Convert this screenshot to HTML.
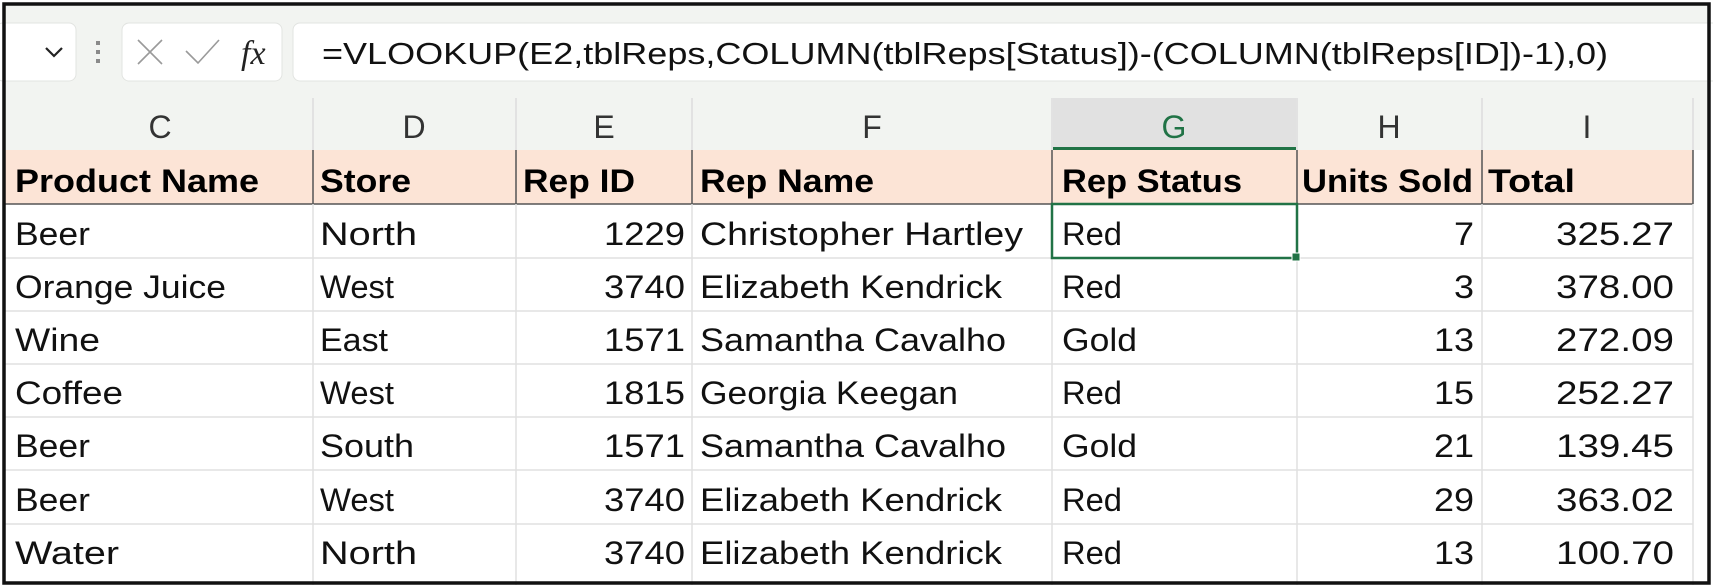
<!DOCTYPE html>
<html><head><meta charset="utf-8"><style>
html,body{margin:0;padding:0;background:#fff}
svg{display:block}
text{font-family:"Liberation Sans",sans-serif}
text.fx{font-family:"Liberation Serif",serif;font-style:italic}
</style></head><body>
<svg width="1713" height="587" viewBox="0 0 1713 587" xmlns="http://www.w3.org/2000/svg">
<rect x="0" y="0" width="1713" height="587" fill="#fff"/>
<rect x="5" y="5" width="1703" height="145" fill="#f2f4f1"/>
<rect x="-4" y="23" width="80" height="58" rx="7" fill="#fff" stroke="#e2e4e1"/>
<path d="M46 48 L54 56 L62 48" fill="none" stroke="#222" stroke-width="2.2"/>
<rect x="96" y="41" width="4" height="4" fill="#8a8a8a"/><rect x="96" y="50" width="4" height="4" fill="#8a8a8a"/><rect x="96" y="59" width="4" height="4" fill="#8a8a8a"/>
<rect x="122" y="23" width="160" height="58" rx="7" fill="#fff" stroke="#e2e4e1"/>
<path d="M138 40 L162 64 M162 40 L138 64" stroke="#9a9a9a" stroke-width="1.6"/>
<path d="M186 51 L198 63 L219 40" fill="none" stroke="#9a9a9a" stroke-width="1.6"/>
<text class="fx" x="241" y="64" font-size="34" fill="#222">fx</text>
<rect x="293" y="23" width="1430" height="58" rx="7" fill="#fff" stroke="#e2e4e1"/>
<text x="322" y="64" font-size="31" fill="#111" textLength="1286" lengthAdjust="spacingAndGlyphs">=VLOOKUP(E2,tblReps,COLUMN(tblReps[Status])-(COLUMN(tblReps[ID])-1),0)</text>
<g stroke="#dcdcdc" stroke-width="1.5">
<line x1="313" y1="98" x2="313" y2="150"/><line x1="516" y1="98" x2="516" y2="150"/><line x1="692" y1="98" x2="692" y2="150"/><line x1="1052" y1="98" x2="1052" y2="150"/><line x1="1297" y1="98" x2="1297" y2="150"/><line x1="1482" y1="98" x2="1482" y2="150"/><line x1="1693" y1="98" x2="1693" y2="150"/>
</g>
<rect x="1053" y="98" width="243" height="52" fill="#e1e1e1"/>
<rect x="1053" y="147" width="243" height="3" fill="#217346"/>
<g font-size="32" fill="#333" text-anchor="middle">
<text x="160" y="138">C</text><text x="414" y="138">D</text><text x="604" y="138">E</text><text x="872" y="138">F</text><text x="1174" y="138" fill="#217346">G</text><text x="1389" y="138">H</text><text x="1587" y="138">I</text>
</g>
<rect x="5" y="150" width="1688" height="54" fill="#fce4d6"/>
<g stroke="#555" stroke-width="1.5">
<line x1="313" y1="150" x2="313" y2="204"/><line x1="516" y1="150" x2="516" y2="204"/><line x1="692" y1="150" x2="692" y2="204"/><line x1="1052" y1="150" x2="1052" y2="204"/><line x1="1297" y1="150" x2="1297" y2="204"/><line x1="1482" y1="150" x2="1482" y2="204"/><line x1="1693" y1="150" x2="1693" y2="204"/>
<line x1="5" y1="204" x2="1693" y2="204"/>
</g>
<g font-size="32" font-weight="bold" fill="#000">
<text x="15" y="192" textLength="244" lengthAdjust="spacingAndGlyphs">Product Name</text>
<text x="320" y="192" textLength="91" lengthAdjust="spacingAndGlyphs">Store</text>
<text x="523" y="192" textLength="112" lengthAdjust="spacingAndGlyphs">Rep ID</text>
<text x="700" y="192" textLength="174" lengthAdjust="spacingAndGlyphs">Rep Name</text>
<text x="1062" y="192" textLength="180" lengthAdjust="spacingAndGlyphs">Rep Status</text>
<text x="1302" y="192" textLength="171" lengthAdjust="spacingAndGlyphs">Units Sold</text>
<text x="1488" y="192" textLength="87" lengthAdjust="spacingAndGlyphs">Total</text>
</g>
<g stroke="#e0e0e0" stroke-width="1.5">
<line x1="5" y1="258" x2="1693" y2="258"/><line x1="5" y1="311" x2="1693" y2="311"/><line x1="5" y1="364" x2="1693" y2="364"/><line x1="5" y1="417" x2="1693" y2="417"/><line x1="5" y1="470" x2="1693" y2="470"/><line x1="5" y1="524" x2="1693" y2="524"/>
<line x1="313" y1="204" x2="313" y2="585"/><line x1="516" y1="204" x2="516" y2="585"/><line x1="692" y1="204" x2="692" y2="585"/><line x1="1052" y1="204" x2="1052" y2="585"/><line x1="1297" y1="204" x2="1297" y2="585"/><line x1="1482" y1="204" x2="1482" y2="585"/><line x1="1693" y1="204" x2="1693" y2="585"/>
</g>
<rect x="1694" y="150" width="14" height="435" fill="#fff"/>
<g font-size="32" fill="#111">
<text x="15" y="245" textLength="75" lengthAdjust="spacingAndGlyphs">Beer</text>
<text x="15" y="298" textLength="211" lengthAdjust="spacingAndGlyphs">Orange Juice</text>
<text x="15" y="351" textLength="85" lengthAdjust="spacingAndGlyphs">Wine</text>
<text x="15" y="404" textLength="108" lengthAdjust="spacingAndGlyphs">Coffee</text>
<text x="15" y="457" textLength="75" lengthAdjust="spacingAndGlyphs">Beer</text>
<text x="15" y="511" textLength="75" lengthAdjust="spacingAndGlyphs">Beer</text>
<text x="15" y="564" textLength="104" lengthAdjust="spacingAndGlyphs">Water</text>

<text x="320" y="245" textLength="97" lengthAdjust="spacingAndGlyphs">North</text>
<text x="320" y="298" textLength="74" lengthAdjust="spacingAndGlyphs">West</text>
<text x="320" y="351" textLength="68" lengthAdjust="spacingAndGlyphs">East</text>
<text x="320" y="404" textLength="74" lengthAdjust="spacingAndGlyphs">West</text>
<text x="320" y="457" textLength="94" lengthAdjust="spacingAndGlyphs">South</text>
<text x="320" y="511" textLength="74" lengthAdjust="spacingAndGlyphs">West</text>
<text x="320" y="564" textLength="97" lengthAdjust="spacingAndGlyphs">North</text>

<g text-anchor="end">
<text x="685" y="245" textLength="81" lengthAdjust="spacingAndGlyphs">1229</text><text x="685" y="298" textLength="81" lengthAdjust="spacingAndGlyphs">3740</text><text x="685" y="351" textLength="81" lengthAdjust="spacingAndGlyphs">1571</text><text x="685" y="404" textLength="81" lengthAdjust="spacingAndGlyphs">1815</text><text x="685" y="457" textLength="81" lengthAdjust="spacingAndGlyphs">1571</text><text x="685" y="511" textLength="81" lengthAdjust="spacingAndGlyphs">3740</text><text x="685" y="564" textLength="81" lengthAdjust="spacingAndGlyphs">3740</text>
<text x="1474" y="245" textLength="20" lengthAdjust="spacingAndGlyphs">7</text><text x="1474" y="298" textLength="20" lengthAdjust="spacingAndGlyphs">3</text><text x="1474" y="351" textLength="40" lengthAdjust="spacingAndGlyphs">13</text><text x="1474" y="404" textLength="40" lengthAdjust="spacingAndGlyphs">15</text><text x="1474" y="457" textLength="40" lengthAdjust="spacingAndGlyphs">21</text><text x="1474" y="511" textLength="40" lengthAdjust="spacingAndGlyphs">29</text><text x="1474" y="564" textLength="40" lengthAdjust="spacingAndGlyphs">13</text>
<text x="1674" y="245" textLength="118" lengthAdjust="spacingAndGlyphs">325.27</text><text x="1674" y="298" textLength="118" lengthAdjust="spacingAndGlyphs">378.00</text><text x="1674" y="351" textLength="118" lengthAdjust="spacingAndGlyphs">272.09</text><text x="1674" y="404" textLength="118" lengthAdjust="spacingAndGlyphs">252.27</text><text x="1674" y="457" textLength="118" lengthAdjust="spacingAndGlyphs">139.45</text><text x="1674" y="511" textLength="118" lengthAdjust="spacingAndGlyphs">363.02</text><text x="1674" y="564" textLength="118" lengthAdjust="spacingAndGlyphs">100.70</text>
</g>

<text x="700" y="245" textLength="323" lengthAdjust="spacingAndGlyphs">Christopher Hartley</text>
<text x="700" y="298" textLength="302" lengthAdjust="spacingAndGlyphs">Elizabeth Kendrick</text>
<text x="700" y="351" textLength="306" lengthAdjust="spacingAndGlyphs">Samantha Cavalho</text>
<text x="700" y="404" textLength="258" lengthAdjust="spacingAndGlyphs">Georgia Keegan</text>
<text x="700" y="457" textLength="306" lengthAdjust="spacingAndGlyphs">Samantha Cavalho</text>
<text x="700" y="511" textLength="302" lengthAdjust="spacingAndGlyphs">Elizabeth Kendrick</text>
<text x="700" y="564" textLength="302" lengthAdjust="spacingAndGlyphs">Elizabeth Kendrick</text>

<text x="1062" y="245" textLength="60" lengthAdjust="spacingAndGlyphs">Red</text>
<text x="1062" y="298" textLength="60" lengthAdjust="spacingAndGlyphs">Red</text>
<text x="1062" y="351" textLength="75" lengthAdjust="spacingAndGlyphs">Gold</text>
<text x="1062" y="404" textLength="60" lengthAdjust="spacingAndGlyphs">Red</text>
<text x="1062" y="457" textLength="75" lengthAdjust="spacingAndGlyphs">Gold</text>
<text x="1062" y="511" textLength="60" lengthAdjust="spacingAndGlyphs">Red</text>
<text x="1062" y="564" textLength="60" lengthAdjust="spacingAndGlyphs">Red</text>
</g>
<rect x="1052" y="204" width="245" height="54" fill="none" stroke="#217346" stroke-width="2.5"/>
<rect x="1292" y="253" width="8" height="8" fill="#217346" stroke="#fff" stroke-width="1"/>
<rect x="4" y="4" width="1705" height="579" fill="none" stroke="#111" stroke-width="3.5"/>
</svg>
</body></html>
